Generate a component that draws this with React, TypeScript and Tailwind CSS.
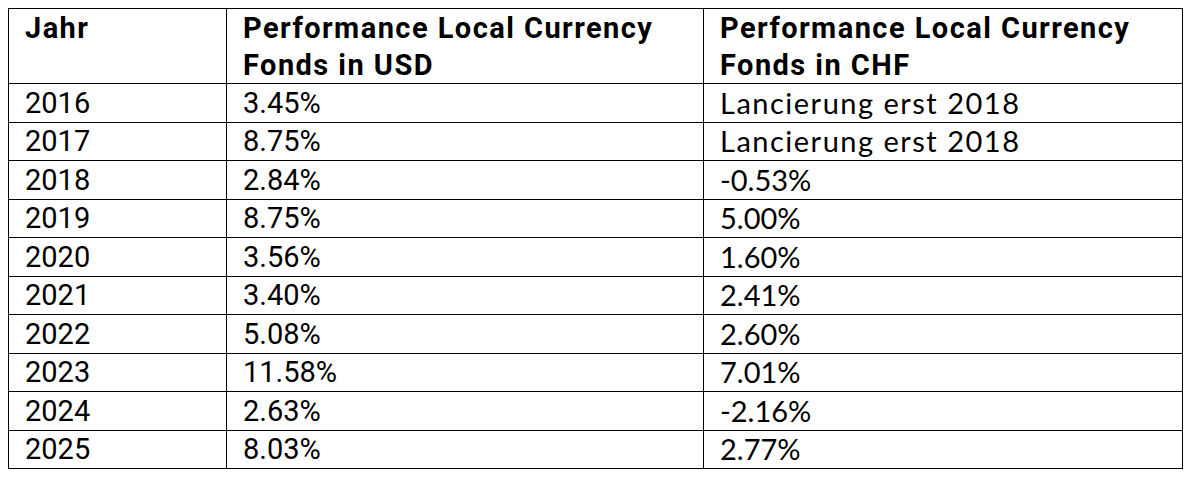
import React from "react";

const rows: [string, string, string][] = [
  ["2016", "3.45%", "Lancierung erst 2018"],
  ["2017", "8.75%", "Lancierung erst 2018"],
  ["2018", "2.84%", "-0.53%"],
  ["2019", "8.75%", "5.00%"],
  ["2020", "3.56%", "1.60%"],
  ["2021", "3.40%", "2.41%"],
  ["2022", "5.08%", "2.60%"],
  ["2023", "11.58%", "7.01%"],
  ["2024", "2.63%", "-2.16%"],
  ["2025", "8.03%", "2.77%"],
];

const din = "font-['Roboto',sans-serif]";
const th = `border border-black pl-4 pt-[1px] text-left align-top font-bold leading-[36.5px] tracking-[1.45px] ${din}`;
const td = "border border-black pl-4 align-middle leading-[30px]";

export default function App() {
  return (
    <div className="min-h-[479px] bg-white pl-2 pt-2">
      <table className="w-[1174px] table-fixed border-collapse text-[29px] text-black">
        <colgroup>
          <col className="w-[218px]" />
          <col className="w-[477px]" />
          <col className="w-[479px]" />
        </colgroup>
        <thead>
          <tr className="h-[74px]">
            <th className={th}>Jahr</th>
            <th className={th}>
              Performance Local Currency
              <br />
              Fonds in USD
            </th>
            <th className={th}>
              Performance Local Currency
              <br />
              Fonds in CHF
            </th>
          </tr>
        </thead>
        <tbody>
          {rows.map(([year, usd, chf]) => (
            <tr key={year} className="h-[38.5px]">
              <td className={`${td} ${din}`}>{year}</td>
              <td className={`${td} ${din}`}>{usd}</td>
              <td className={`${td} font-['Lato',sans-serif] ${chf.startsWith("Lanc") ? "tracking-[1.5px]" : ""}`}>
                {chf}
              </td>
            </tr>
          ))}
        </tbody>
      </table>
    </div>
  );
}
